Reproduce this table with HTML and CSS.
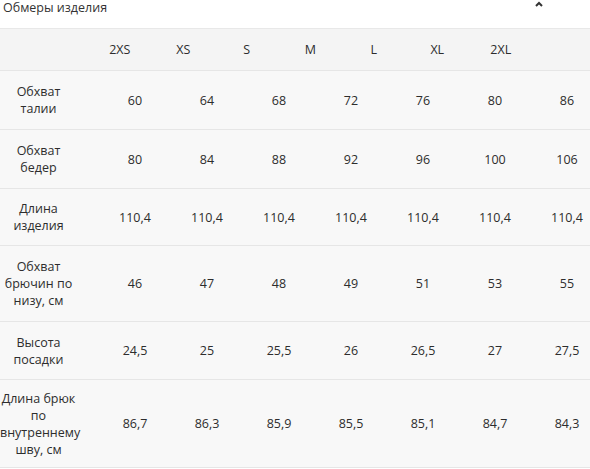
FILE: index.html
```html
<!DOCTYPE html>
<html lang="ru">
<head>
<meta charset="utf-8">
<link rel="stylesheet" href="styles.css">
</head>
<body>
<div class="section">
  <div class="head">
    <span class="title">Обмеры изделия</span>
    <svg class="caret" width="8" height="6" viewBox="0 0 8 6"><path d="M1 5 L4 2 L7 5" fill="none" stroke="#333" stroke-width="2"/></svg>
  </div>
  <div class="table">
    <div class="hrow">
      <div></div><div>2XS</div><div>XS</div><div>S</div><div>M</div><div>L</div><div>XL</div><div>2XL</div>
    </div>
    <div class="row r1">
      <div class="lbl">Обхват талии</div><div>60</div><div>64</div><div>68</div><div>72</div><div>76</div><div>80</div><div>86</div>
    </div>
    <div class="row r2">
      <div class="lbl">Обхват бедер</div><div>80</div><div>84</div><div>88</div><div>92</div><div>96</div><div>100</div><div>106</div>
    </div>
    <div class="row r3">
      <div class="lbl">Длина изделия</div><div>110,4</div><div>110,4</div><div>110,4</div><div>110,4</div><div>110,4</div><div>110,4</div><div>110,4</div>
    </div>
    <div class="row r4">
      <div class="lbl">Обхват брючин по низу, см</div><div>46</div><div>47</div><div>48</div><div>49</div><div>51</div><div>53</div><div>55</div>
    </div>
    <div class="row r5">
      <div class="lbl">Высота посадки</div><div>24,5</div><div>25</div><div>25,5</div><div>26</div><div>26,5</div><div>27</div><div>27,5</div>
    </div>
    <div class="row r6">
      <div class="lbl">Длина брюк по внутреннему шву, см</div><div>86,7</div><div>86,3</div><div>85,9</div><div>85,5</div><div>85,1</div><div>84,7</div><div>84,3</div>
    </div>
  </div>
</div>
</body>
</html>
```
FILE: styles.css
```css
html, body {
  margin: 0;
  padding: 0;
  background: #fff;
  overflow: hidden;
}
body {
  font-family: "Open Sans", "Noto Sans", sans-serif;
  font-size: 12.5px;
  color: #2d2d2d;
  width: 590px;
}
.section {
  width: 603px;
}
.head {
  height: 28px;
  display: flex;
  justify-content: space-between;
  align-items: flex-start;
  padding-left: 3px;
  box-sizing: border-box;
}
.title {
  line-height: 16px;
  color: #333;
}
.caret {
  margin-right: 60px;
  margin-top: 1px;
}
.table {
  border-top: 1px solid #e8e8e8;
}
.hrow {
  display: grid;
  grid-template-columns: 88px repeat(7, 63.5px);
  height: 42px;
  box-sizing: border-box;
  align-items: center;
  text-align: center;
  background: #f4f4f4;
  border-bottom: 1px solid #e6e6e6;
}
.row {
  display: grid;
  grid-template-columns: 99px repeat(7, 72px);
  align-items: center;
  text-align: center;
  background: #f8f8f8;
  border-bottom: 1px solid #e6e6e6;
  box-sizing: border-box;
  line-height: 17px;
}
.lbl {
  padding-right: 22px;
}
.r1, .r2 { height: 59px; }
.r3 { height: 57px; }
.r4 { height: 76px; }
.r5 { height: 58px; }
.r6 { height: 88px; }
```
